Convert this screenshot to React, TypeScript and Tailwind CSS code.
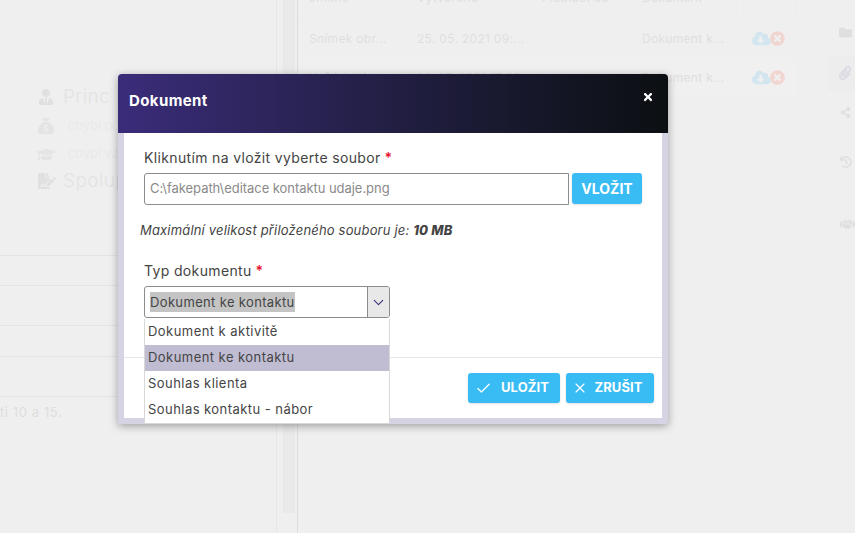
import { Check, ChevronDown, X } from "lucide-react";
import {
  FaCloudDownloadAlt,
  FaFileSignature,
  FaFolder,
  FaGraduationCap,
  FaHandshake,
  FaHistory,
  FaPaperclip,
  FaShareAlt,
  FaTimes,
  FaTimesCircle,
  FaUserTie,
} from "react-icons/fa";
import { FaSackDollar } from "react-icons/fa6";

const font = "font-['Inter','Liberation_Sans',sans-serif]";

const LeftColumn = () => (
  <div className="w-[277px] shrink-0 h-full border-r border-[#e6e6e6] overflow-hidden">
    {/* Contact info */}
    <div className="h-[255px] pt-[85px] pl-[38px] text-[#e4e3e2] font-light">
      <div className="flex items-center gap-[9px] h-6 text-[19px] tracking-[0.4px]">
        <FaUserTie className="w-4 h-4 text-[#e0e0e0]" />
        <span>Princ Michal</span>
      </div>
      <div className="flex items-center gap-[14px] h-[28px] mt-[3px] text-[13px] text-[#e8e8e8]">
        <FaSackDollar className="w-4 h-4 text-[#e4e4e4]" />
        <span>chybí pojištění</span>
      </div>
      <div className="flex items-center gap-3 h-[28px] text-[13px] text-[#e8e8e8] -ml-[1px]">
        <FaGraduationCap className="w-[19px] h-[19px] text-[#e4e4e4]" />
        <span>chybí vzdělání</span>
      </div>
      <div className="flex items-center gap-[7px] h-6 mt-[1px] text-[19px] tracking-[0.4px]">
        <FaFileSignature className="w-[18px] h-[18px] text-[#e0e0e0]" />
        <span>Spolupráce</span>
      </div>
    </div>
    {/* Rows */}
    <div className="h-[30px] border-t border-[#e4e4e4]" />
    <div className="h-[40px] border-t border-[#e4e4e4]" />
    <div className="h-[31px] border-t border-[#e4e4e4]" />
    <div className="h-[40px] border-t border-[#e4e4e4]" />
    <div className="border-t border-[#e4e4e4] pt-[6px] text-[13px] tracking-[0.6px] text-[#dedede] whitespace-nowrap">
      ti 10 a 15.
    </div>
  </div>
);

const Scrollbar = () => (
  <div className="w-[21px] shrink-0 h-full pl-[6px] pr-[2px] border-r border-[#dcdcdc]">
    <div className="h-[513px] bg-[#e9e9e9]" />
  </div>
);

const rowCols = "grid grid-cols-[108px_125px_100px_106px_60px] text-[12px] tracking-[0.3px] text-[#dfdfdf]";

const HeadCell = ({ children }: { children?: string }) => (
  <div className="h-[18px] pl-[11px] border-r border-[#ededed] overflow-hidden">
    <div className="-mt-[9px] leading-[14px]">{children}</div>
  </div>
);

const Cell = ({ children }: { children?: React.ReactNode }) => (
  <div className="pl-[11px] flex items-center">{children}</div>
);

const RowActions = () => (
  <div className="flex items-center pl-[4px]">
    <FaCloudDownloadAlt className="w-[19px] h-[19px] text-[#d3e6ef]" />
    <FaTimesCircle className="w-[15px] h-[15px] -ml-[1px] text-[#f1d5d0]" />
  </div>
);

const Table = () => (
  <div className="w-[499px] shrink-0 h-full overflow-hidden">
    <div className={`${rowCols} border-b border-[#ededed]`}>
      <HeadCell>Jméno</HeadCell>
      <HeadCell>Vytvořeno</HeadCell>
      <HeadCell>Platnost do</HeadCell>
      <HeadCell>Dokument</HeadCell>
      <HeadCell />
    </div>
    <div className={`${rowCols} h-[39px]`}>
      <Cell>Snímek obr...</Cell>
      <Cell>25. 05. 2021 09:...</Cell>
      <Cell />
      <Cell>Dokument k...</Cell>
      <Cell><RowActions /></Cell>
    </div>
    <div className={`${rowCols} h-[39px] bg-[#f0f0f0]`}>
      <Cell>Kvůli údaje...</Cell>
      <Cell>14. 07. 2021 17:09</Cell>
      <Cell />
      <Cell>Dokument k...</Cell>
      <Cell><RowActions /></Cell>
    </div>
  </div>
);

const Sidebar = () => (
  <div className="flex-1 h-full flex flex-col items-end text-[#dfdfdf]">
    <div className="h-[55px] w-[27px] flex items-center justify-end pr-[3px] pt-[10px]">
      <FaFolder className="w-[13px] h-[13px]" />
    </div>
    <div className="h-[36px] w-[27px] flex items-center justify-end pr-[3px] bg-[#ededed]">
      <FaPaperclip className="w-[14px] h-[14px] text-[#dbdae3]" />
    </div>
    <div className="h-[42px] w-[27px] flex items-center justify-end pr-[4px]">
      <FaShareAlt className="w-[11px] h-[11px]" />
    </div>
    <div className="h-[51px] w-[27px] flex items-center justify-end pr-[3px] pt-[6px]">
      <FaHistory className="w-[12px] h-[12px]" />
    </div>
    <div className="h-[63px] w-[27px] flex items-center justify-end pt-[18px]">
      <FaHandshake className="w-[15px] h-[15px]" />
    </div>
  </div>
);

const Req = () => <span className="text-[#e8112d] font-semibold"> *</span>;

const Modal = () => (
  <div className="absolute left-[118px] top-[74px] w-[550px] h-[350px] rounded-t-[4px] rounded-b-[2px] bg-[#d6d4e4] shadow-[0_2px_8px_rgba(0,0,0,0.35)] flex flex-col">
    <div className="h-[59px] shrink-0 rounded-t-[4px] bg-gradient-to-r from-[#3b2c7a] to-[#0c0f12] flex items-start justify-between pl-[11px] pr-[14px]">
      <h2 className="mt-[17px] text-[15px] leading-[20px] font-bold text-white tracking-[0.4px]">Dokument</h2>
      <FaTimes className="mt-[17px] w-[12px] h-[12px] text-white" />
    </div>
    <div className="relative mx-[6px] mb-[6px] flex-1 bg-white flex flex-col">
      <div className="h-[225px] border-b border-[#e6e6e6] pt-[15px] pl-[20px] text-[#444444]">
        <label className="block h-[19px] text-[14px] leading-[19px] tracking-[0.35px]">
          Kliknutím na vložit vyberte soubor<Req />
        </label>
        <div className="flex gap-[3px] mt-[6px]">
          <div className="w-[425px] h-[32px] border border-[#8c8c8c] rounded-l-[3px] flex items-center pl-[5px] text-[13px] tracking-[-0.05px] text-[#8a8a8a]">
            C:\fakepath\editace kontaktu udaje.png
          </div>
          <button className="w-[70px] h-[31px] bg-[#38bcf3] rounded-[3px] text-white text-[14px] font-bold shadow-sm">
            VLOŽIT
          </button>
        </div>
        <p className="mt-[16px] -ml-[4px] h-[18px] text-[13px] leading-[18px] italic text-[#444444] tracking-[0.18px]">
          Maximální velikost přiloženého souboru je: <b className="font-extrabold">10 MB</b>
        </p>
        <label className="block mt-[22px] h-[19px] text-[14px] leading-[19px] tracking-[0.35px]">
          Typ dokumentu<Req />
        </label>
        <div className="flex w-[246px] h-[32px] mt-[6px] border border-[#8c8c8c] rounded-[3px] overflow-hidden">
          <div className="flex-1 flex items-center pl-[5px]">
            <span className="bg-[#c4c4c4] text-[13px] leading-[20px] tracking-[0.35px] text-[#444444]">Dokument ke kontaktu</span>
          </div>
          <div className="w-[22px] bg-[#e8e8e8] border-l border-[#8c8c8c] flex items-center justify-center">
            <ChevronDown className="w-[17px] h-[17px] text-[#3b2c7a]" strokeWidth={1.5} />
          </div>
        </div>
      </div>
      <div className="flex justify-end gap-[6px] pt-[15px] pr-[8px]">
        <button className="w-[92px] h-[30px] pr-[4px] bg-[#38bcf3] rounded-[3px] text-white text-[13px] font-bold tracking-[0.1px] shadow-sm flex items-center justify-center gap-[9px]">
          <Check className="w-[17px] h-[17px]" strokeWidth={1.75} />
          ULOŽIT
        </button>
        <button className="w-[88px] h-[30px] pr-[5px] bg-[#38bcf3] rounded-[3px] text-white text-[13px] font-bold tracking-[0.1px] shadow-sm flex items-center justify-center gap-[6px]">
          <X className="w-[16px] h-[16px]" strokeWidth={1.75} />
          ZRUŠIT
        </button>
      </div>
      {/* Open select list */}
      <ul className="absolute left-[20px] top-[186px] w-[246px] h-[105px] bg-white border-x border-b border-[#d8d8d8] text-[13px] tracking-[0.45px] text-[#444444]">
        <li className="h-[26px] pl-[3px] flex items-center">Dokument k aktivitě</li>
        <li className="h-[26px] pl-[3px] flex items-center bg-[#c0bdd2]">Dokument ke kontaktu</li>
        <li className="h-[26px] pl-[3px] flex items-center">Souhlas klienta</li>
        <li className="h-[26px] pl-[3px] flex items-center">Souhlas kontaktu - nábor</li>
      </ul>
    </div>
  </div>
);

export default function App() {
  return (
    <div className={`${font} relative w-[855px] h-[533px] bg-[#efefef] overflow-hidden flex`}>
      <LeftColumn />
      <Scrollbar />
      <Table />
      <Sidebar />
      <Modal />
    </div>
  );
}
